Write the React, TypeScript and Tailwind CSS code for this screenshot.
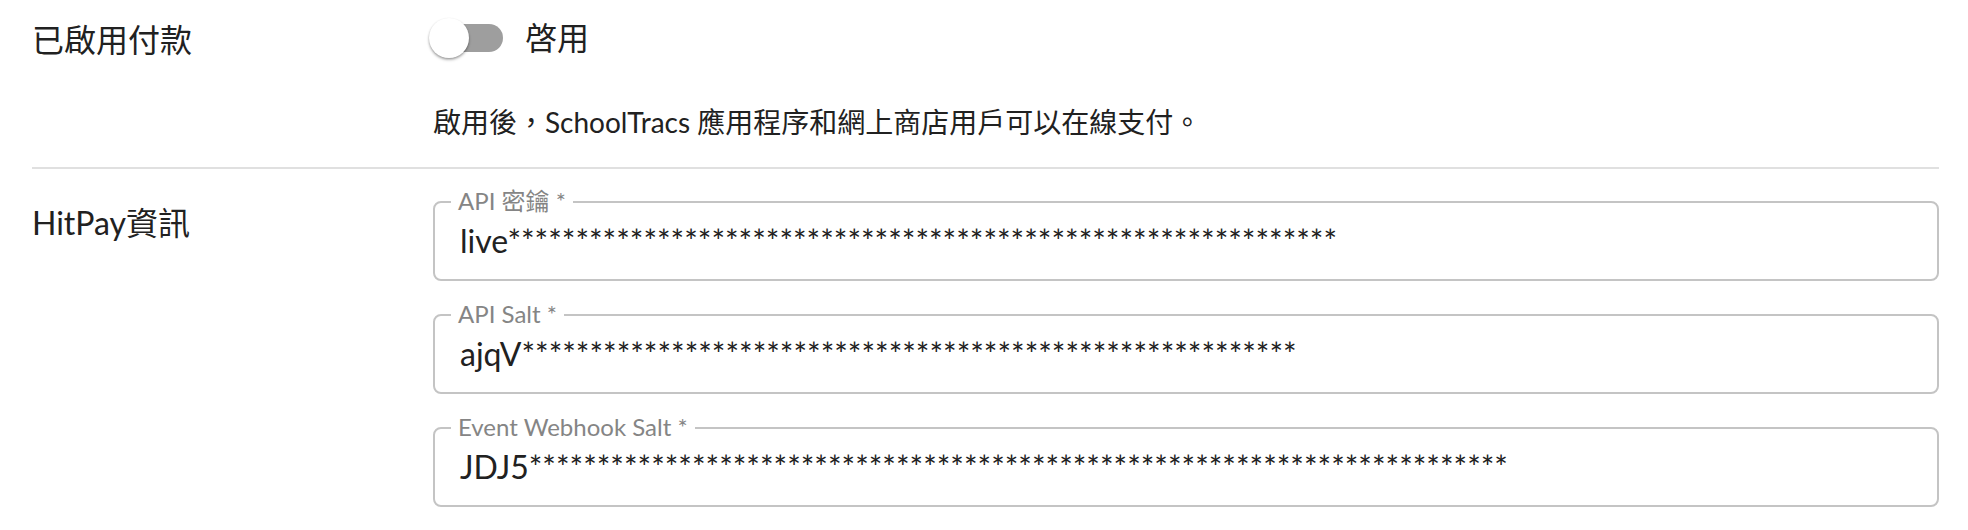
import React from "react";

const font = {
  fontFamily: '"Lato", "Noto Sans CJK TC", "Noto Sans", sans-serif',
};

function Field({ label, value }: { label: string; value: string }) {
  return (
    <div className="relative h-[80px] border-2 border-[#c4c4c4] rounded-[8px] bg-white">
      <span className="absolute -top-[14px] left-[16px] px-[7px] bg-white text-[24px] leading-[24px] text-[#858585] whitespace-nowrap">
        {label}
      </span>
      <div className="pl-[25px] pt-[14px] text-[32px] leading-[48px] text-[#212121] whitespace-nowrap">
        {value}
      </div>
    </div>
  );
}

export default function App() {
  const s = (n: number) => "*".repeat(n);
  return (
    <div className="w-[1968px] h-[530px] bg-white overflow-hidden" style={font}>
      <div className="pl-[32px] pr-[29px]">
        {/* Section 1 */}
        <div className="flex">
          <div className="w-[401px] shrink-0 pt-[16px] text-[32px] leading-[48px] text-[#212121]">
            已啟用付款
          </div>
          <div className="flex-1">
            <div className="h-[76px] flex items-center">
              <div className="relative w-[68px] h-[28px] ml-[2px] rounded-full bg-[#9e9e9e]">
                <div className="absolute -left-[6px] -top-[6px] w-[40px] h-[40px] rounded-full bg-white shadow-[0_2px_3px_rgba(0,0,0,0.25),0_1px_2px_rgba(0,0,0,0.2)]" />
              </div>
              <span className="ml-[22px] text-[32px] leading-[48px] text-[#212121]">啓用</span>
            </div>
            <div className="mt-[25px] text-[28px] leading-[42px] text-[#212121]">
              啟用後，SchoolTracs 應用程序和網上商店用戶可以在線支付。
            </div>
          </div>
        </div>
        <div className="mt-[24px] h-[2px] bg-[#e0e0e0]" />
        {/* Section 2 */}
        <div className="flex">
          <div className="w-[401px] shrink-0 pt-[30px] text-[32px] leading-[48px] text-[#212121]">
            HitPay資訊
          </div>
          <div className="flex-1 pt-[32px] flex flex-col gap-[33px]">
            <Field label="API 密鑰 *" value={"live" + s(61)} />
            <Field label="API Salt *" value={"ajqV" + s(57)} />
            <Field label="Event Webhook Salt *" value={"JDJ5" + s(72)} />
          </div>
        </div>
      </div>
    </div>
  );
}
